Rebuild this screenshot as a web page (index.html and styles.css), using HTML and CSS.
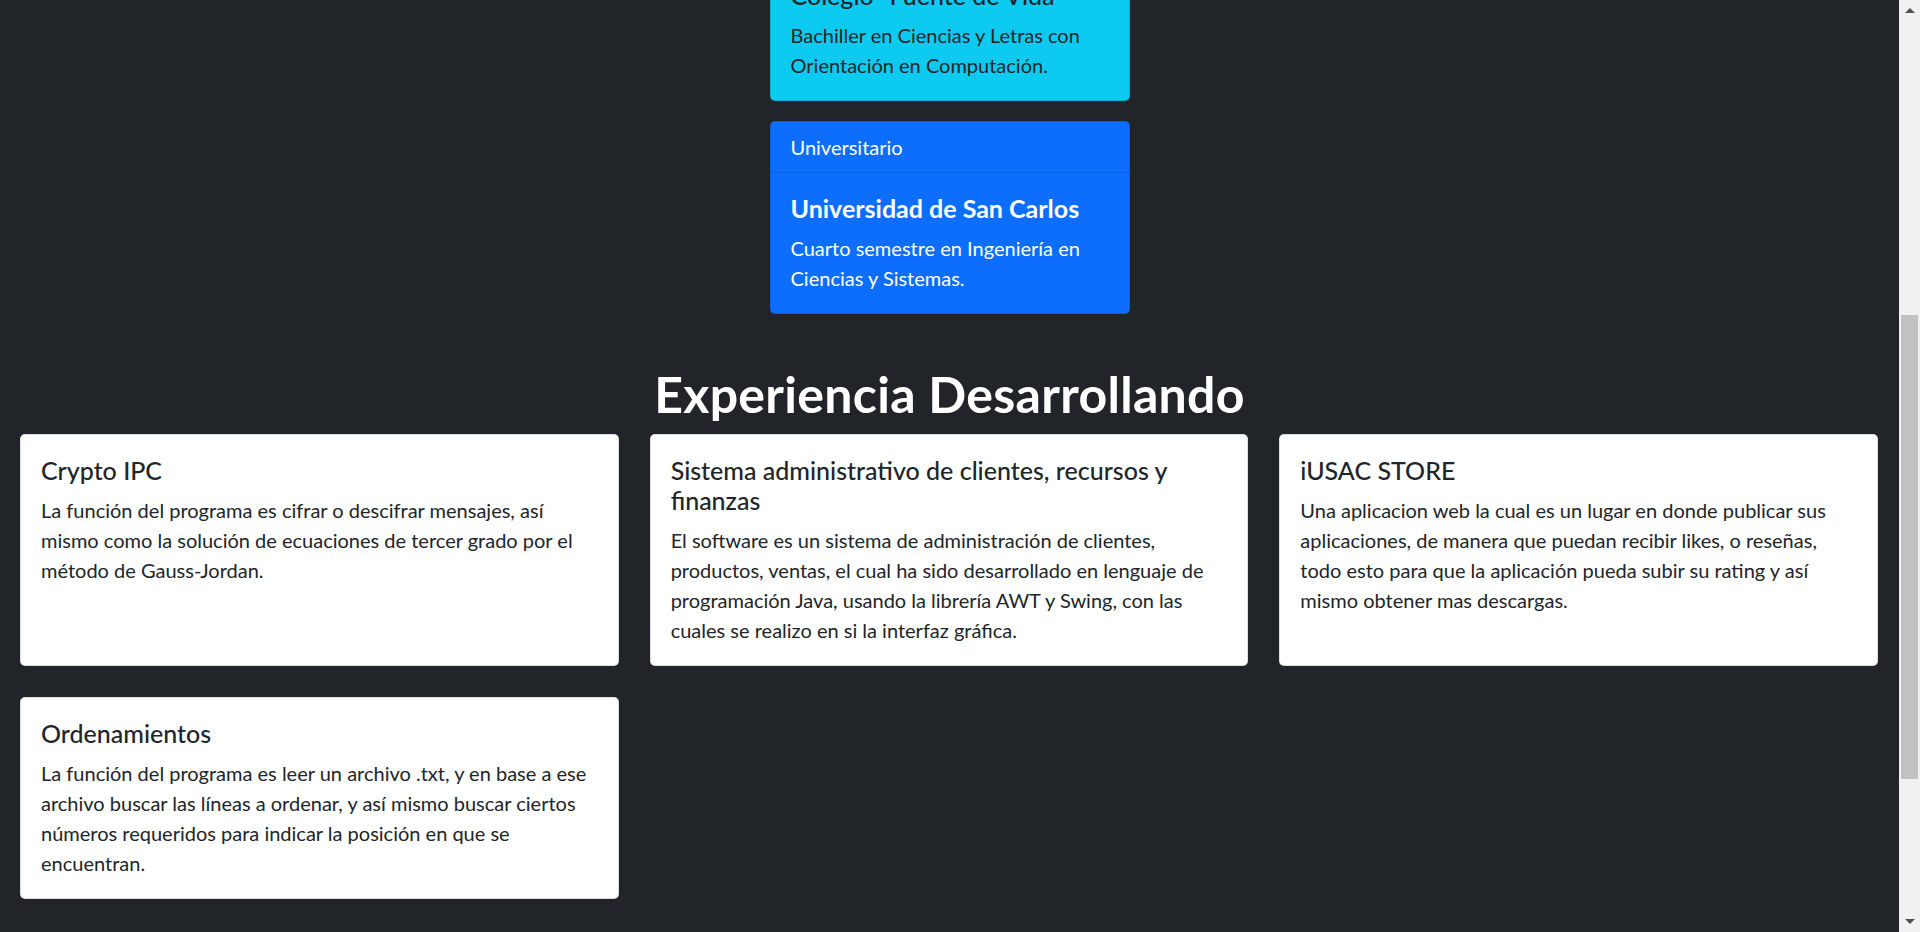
FILE: index.html
```html
<!DOCTYPE html>
<html lang="es">
<head>
<meta charset="utf-8">
<title>Portafolio</title>
<link rel="stylesheet" href="styles.css">
</head>
<body>
<div class="viewport">
  <main class="page">
    <section class="studies">
      <article class="card card-info">
        <header class="card-header">Diversificado</header>
        <div class="card-body">
          <h5 class="card-title">Colegio "Fuente de Vida"</h5>
          <p class="card-text">Bachiller en Ciencias y Letras con Orientación en Computación.</p>
        </div>
      </article>
      <article class="card card-primary">
        <header class="card-header">Universitario</header>
        <div class="card-body">
          <h5 class="card-title strong">Universidad de San Carlos</h5>
          <p class="card-text">Cuarto semestre en Ingeniería en Ciencias y Sistemas.</p>
        </div>
      </article>
    </section>

    <h1 class="section-title">Experiencia Desarrollando</h1>

    <section class="projects">
      <article class="card card-light">
        <div class="card-body">
          <h5 class="card-title">Crypto IPC</h5>
          <p class="card-text">La función del programa es cifrar o descifrar mensajes, así mismo como la solución de ecuaciones de tercer grado por el método de Gauss-Jordan.</p>
        </div>
      </article>
      <article class="card card-light">
        <div class="card-body">
          <h5 class="card-title">Sistema administrativo de clientes, recursos y finanzas</h5>
          <p class="card-text">El software es un sistema de administración de clientes, productos, ventas, el cual ha sido desarrollado en lenguaje de programación Java, usando la librería AWT y Swing, con las cuales se realizo en si la interfaz gráfica.</p>
        </div>
      </article>
      <article class="card card-light">
        <div class="card-body">
          <h5 class="card-title">iUSAC STORE</h5>
          <p class="card-text">Una aplicacion web la cual es un lugar en donde publicar sus aplicaciones, de manera que puedan recibir likes, o reseñas, todo esto para que la aplicación pueda subir su rating y así mismo obtener mas descargas.</p>
        </div>
      </article>
      <article class="card card-light">
        <div class="card-body">
          <h5 class="card-title">Ordenamientos</h5>
          <p class="card-text">La función del programa es leer un archivo .txt, y en base a ese archivo buscar las líneas a ordenar, y así mismo buscar ciertos números requeridos para indicar la posición en que se encuentran.</p>
        </div>
      </article>
    </section>
  </main>

  <div class="scrollbar" aria-hidden="true">
    <div class="sb-button"><span class="sb-arrow sb-up"></span></div>
    <div class="sb-track"><div class="sb-thumb"></div></div>
    <div class="sb-button"><span class="sb-arrow sb-down"></span></div>
  </div>
</div>
</body>
</html>
```

FILE: styles.css
```css
* { box-sizing: border-box; }

html, body {
  margin: 0;
  padding: 0;
  height: 932px;
  overflow: hidden;
}

body {
  background: #212529;
  color: #212529;
  font-family: Lato, "Liberation Sans", sans-serif;
  font-size: 20px;
  line-height: 30px;
}

.viewport {
  display: flex;
  height: 932px;
}

.page {
  flex: 1;
  min-width: 0;
  overflow: hidden;
}

/* ---------- studies ---------- */
.studies {
  width: 360px;
  margin: -92px auto 0;
  display: flex;
  flex-direction: column;
  gap: 20px;
}

.card {
  border: 1px solid rgba(0, 0, 0, 0.125);
  border-radius: 5px;
  display: flex;
  flex-direction: column;
}

.card-info { background: #0dcaf0; color: #212529; }
.card-primary { background: #0d6efd; color: #fff; }
.card-light { background: #fff; color: #212529; }

.card-header {
  padding: 10px 20px;
  border-bottom: 1px solid rgba(0, 0, 0, 0.125);
}

.card-body {
  padding: 20px;
  flex: 1;
}

.card-title {
  margin: 0 0 10px;
  font-size: 25px;
  line-height: 30px;
  font-weight: 500;
}

.card-title.strong { font-weight: 700; }

.card-text {
  margin: 0;
}

/* ---------- heading ---------- */
.section-title {
  margin: 50px 0 10px;
  text-align: center;
  color: #fff;
  font-size: 50px;
  line-height: 60px;
  font-weight: 700;
  letter-spacing: 0.3px;
}

/* ---------- projects ---------- */
.projects {
  display: grid;
  grid-template-columns: repeat(3, 1fr);
  gap: 31px 31px;
  padding: 0 21px 0 20px;
}

/* ---------- fake scrollbar ---------- */
.scrollbar {
  width: 21px;
  flex: none;
  background: #f1f1f1;
  display: flex;
  flex-direction: column;
}

.sb-button {
  height: 21px;
  display: flex;
  align-items: center;
  justify-content: center;
}

.sb-arrow {
  width: 0;
  height: 0;
  border-left: 5px solid transparent;
  border-right: 5px solid transparent;
}

.sb-up { border-bottom: 5px solid #505050; }
.sb-down { border-top: 5px solid #505050; }

.sb-track {
  flex: 1;
  padding: 294px 2px 0;
}

.sb-thumb {
  height: 464px;
  background: #c1c1c1;
}
```
